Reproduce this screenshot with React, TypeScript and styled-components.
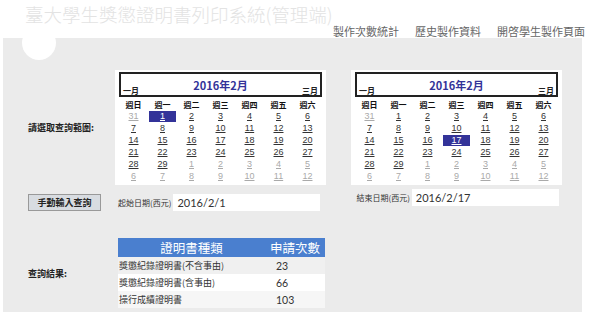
import styled, { createGlobalStyle } from 'styled-components'

const GlobalStyle = createGlobalStyle`
  body {
    margin: 0;
    background: #fff;
    font-family: "Noto Sans CJK TC", "Liberation Sans", sans-serif;
  }
`

const Page = styled.div`
  width: 591px;
  height: 312px;
  overflow: hidden;
`

const Header = styled.header`
  height: 38px;
  box-sizing: border-box;
  display: flex;
  flex-direction: column;
  padding-left: 25px;
`

const Title = styled.h1`
  margin: 0;
  padding-top: 3px;
  font-size: 18.5px;
  line-height: 22px;
  font-weight: 300;
  color: #e3e3e3;
  white-space: nowrap;
`

const Nav = styled.nav`
  display: flex;
  justify-content: flex-end;
  gap: 16px;
  padding-right: 6px;
  font-size: 11px;
  line-height: 12px;
  color: #666;
`

const Panel = styled.main`
  position: relative;
  margin-left: 3px;
  width: 579px;
  height: 274px;
  box-sizing: border-box;
  background: #ebebeb;
  padding: 32px 0 0 25px;
`

const Dot = styled.div`
  position: absolute;
  left: 19px;
  top: -12px;
  width: 34px;
  height: 34px;
  border-radius: 50%;
  background: #fff;
`

const Row = styled.div<{ $top?: number; $align?: string }>`
  display: flex;
  align-items: ${p => p.$align || 'center'};
  margin-top: ${p => p.$top || 0}px;
`

const SideLabel = styled.div<{ $w: number }>`
  width: ${p => p.$w}px;
  flex-shrink: 0;
  font-size: 9px;
  font-weight: 700;
  color: #222;
`

const Calendar = styled.div<{ $gap?: number }>`
  width: 211px;
  box-sizing: border-box;
  background: #fff;
  padding: 2px 4px 2px;
  margin-left: ${p => p.$gap || 0}px;
`

const CalHead = styled.div`
  height: 25px;
  box-sizing: border-box;
  border: 2px solid #222;
  display: flex;
  justify-content: space-between;
  align-items: flex-end;
  padding: 0 2px;
`

const NavMonth = styled.span`
  font-size: 8px;
  line-height: 10px;
  font-weight: 700;
  color: #222;
  text-decoration: underline;
  margin-bottom: -1px;
`

const MonthTitle = styled.span`
  font-size: 11px;
  line-height: 14px;
  font-weight: 700;
  color: #333399;
  margin-bottom: 3px;
`

const Grid = styled.div`
  display: grid;
  grid-template-columns: repeat(7, 1fr);
  grid-auto-rows: 12px;
  padding-top: 2px;
`

const DayName = styled.div`
  font-size: 8px;
  font-weight: 700;
  line-height: 12px;
  text-align: center;
  color: #111;
`

const DateCell = styled.div<{ $muted?: boolean; $sel?: boolean }>`
  font-family: "Liberation Sans", sans-serif;
  font-size: 9px;
  line-height: 11px;
  height: 11px;
  margin: 0 1px 1px;
  text-align: center;
  text-decoration: underline;
  color: ${p => (p.$sel ? '#fff' : p.$muted ? '#aaa' : '#333')};
  background: ${p => (p.$sel ? '#333399' : 'transparent')};
`

const Button = styled.button`
  width: 73px;
  height: 17px;
  padding: 0;
  border: 1px solid #999;
  background: #d8dce1;
  font-family: "Noto Sans CJK TC", sans-serif;
  font-size: 9px;
  font-weight: 700;
  color: #222;
  line-height: 15px;
`

const DateGroup = styled.div<{ $ml: number; $lift?: number }>`
  display: flex;
  align-items: center;
  gap: 2px;
  margin-left: ${p => p.$ml}px;
  margin-top: ${p => -(p.$lift || 0)}px;
`

const DateLabel = styled.span`
  font-size: 8px;
  color: #333;
  white-space: nowrap;
`

const DateBox = styled.div`
  width: 147px;
  height: 17px;
  box-sizing: border-box;
  background: #fff;
  padding-left: 4px;
  font-family: Lato, "Open Sans", sans-serif;
  font-size: 11px;
  line-height: 17px;
  color: #333;
`

const Table = styled.table`
  border-collapse: collapse;
  width: 207px;
`

const Th = styled.th<{ $w: number }>`
  width: ${p => p.$w}px;
  height: 19px;
  padding: 0;
  background: #4a7fcf;
  color: #fff;
  font-size: 12.5px;
  font-weight: 400;
  text-align: center;
`

const Tr = styled.tr<{ $shade?: string }>`
  height: 17px;
  background: ${p => p.$shade || '#fff'};
`

const Td = styled.td<{ $num?: boolean }>`
  padding: 0 0 0 ${p => (p.$num ? 11 : 1)}px;
  font-size: ${p => (p.$num ? 10.5 : 9)}px;
  font-family: ${p => (p.$num ? 'Lato, sans-serif' : '"Noto Sans CJK TC", sans-serif')};
  color: #333;
  white-space: nowrap;
`

const dayNames = ['週日', '週一', '週二', '週三', '週四', '週五', '週六']

const cells = [
  { d: 31, m: true },
  ...Array.from({ length: 29 }, (_, i) => ({ d: i + 1, m: false })),
  ...Array.from({ length: 12 }, (_, i) => ({ d: i + 1, m: true })),
]

function MonthCalendar({ selected, gap }: { selected: number; gap?: number }) {
  return (
    <Calendar $gap={gap}>
      <CalHead>
        <NavMonth>一月</NavMonth>
        <MonthTitle>2016年2月</MonthTitle>
        <NavMonth>三月</NavMonth>
      </CalHead>
      <Grid>
        {dayNames.map(n => (
          <DayName key={n}>{n}</DayName>
        ))}
        {cells.map((c, i) => (
          <DateCell key={i} $muted={c.m} $sel={!c.m && c.d === selected}>
            {c.d}
          </DateCell>
        ))}
      </Grid>
    </Calendar>
  )
}

const results = [
  { name: '獎懲紀錄證明書(不含事由)', count: 23, shade: '#f0f0f0' },
  { name: '獎懲紀錄證明書(含事由)', count: 66, shade: '#ffffff' },
  { name: '操行成績證明書', count: 103, shade: '#f6f6f6' },
]

export default function App() {
  return (
    <Page>
      <GlobalStyle />
      <Header>
        <Title>臺大學生獎懲證明書列印系統(管理端)</Title>
        <Nav>
          <span>製作次數統計</span>
          <span>歷史製作資料</span>
          <span>開啓學生製作頁面</span>
        </Nav>
      </Header>
      <Panel>
        <Dot />
        <Row>
          <SideLabel $w={87}>請選取查詢範圍:</SideLabel>
          <MonthCalendar selected={1} />
          <MonthCalendar selected={17} gap={25} />
        </Row>
        <Row $top={9} $align="flex-start">
          <Button>手動輸入查詢</Button>
          <DateGroup $ml={17}>
            <DateLabel>起始日期(西元)</DateLabel>
            <DateBox>2016/2/1</DateBox>
          </DateGroup>
          <DateGroup $ml={36} $lift={5}>
            <DateLabel>結束日期(西元)</DateLabel>
            <DateBox>2016/2/17</DateBox>
          </DateGroup>
        </Row>
        <Row $top={27}>
          <SideLabel $w={90}>查詢結果:</SideLabel>
          <Table>
            <thead>
              <tr>
                <Th $w={147}>證明書種類</Th>
                <Th $w={60}>申請次數</Th>
              </tr>
            </thead>
            <tbody>
              {results.map(r => (
                <Tr key={r.name} $shade={r.shade}>
                  <Td>{r.name}</Td>
                  <Td $num>{r.count}</Td>
                </Tr>
              ))}
            </tbody>
          </Table>
        </Row>
      </Panel>
    </Page>
  )
}
